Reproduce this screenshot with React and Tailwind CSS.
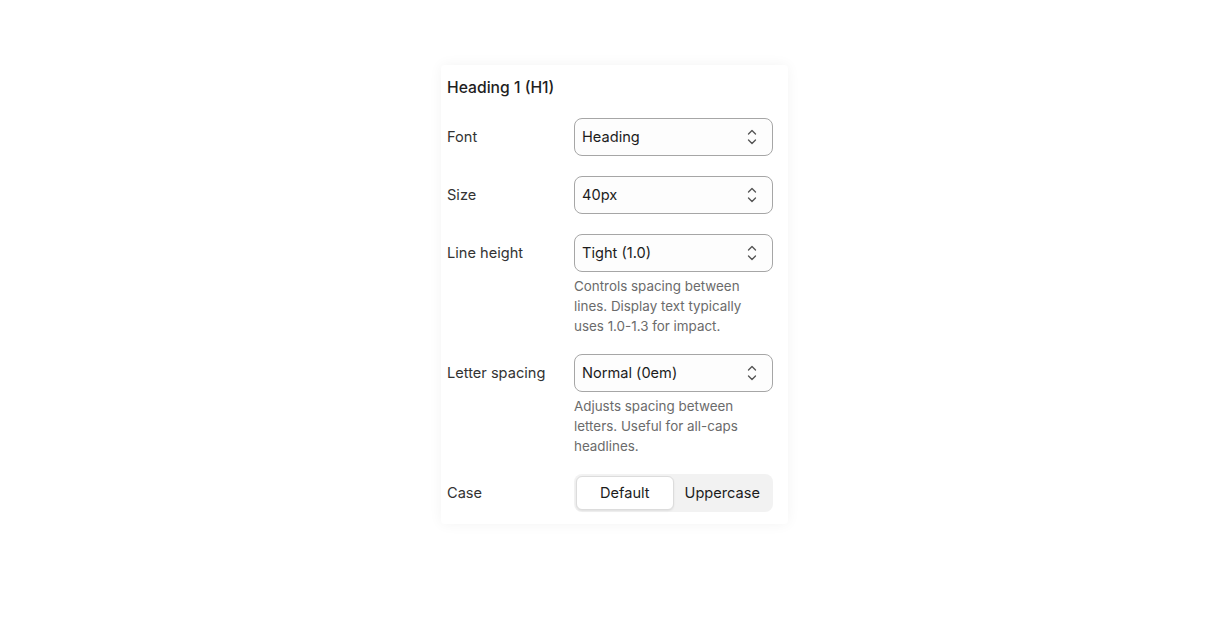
import React, { useState } from 'react';

const Chevrons = () => (
    <svg width="10" height="16" viewBox="0 0 10 16" fill="none" stroke="#555" strokeWidth="1.35" strokeLinecap="round" strokeLinejoin="round">
        <path d="M1.5 5 5 1.5 8.5 5" />
        <path d="M1.5 11 5 14.5 8.5 11" />
    </svg>
);

const SelectBox = ({ value }) => (
    <div className="flex h-[38px] w-[199px] items-center justify-between rounded-lg border border-[#a6a6a6] bg-[#fdfdfd] pl-[7px] pr-[15px] text-[14.6px] text-[#1c1c1c]">
        <span className="pt-[2px]">{value}</span>
        <Chevrons />
    </div>
);

const Row = ({ label, value, help, className }) => (
    <div className={"flex " + (className || "")}>
        <div className="flex h-[38px] w-[127px] items-center pt-[2px] text-[14.6px] text-[#333]">{label}</div>
        <div className="flex flex-col">
            <SelectBox value={value} />
            {help && (
                <p className="mt-[4px] w-[192px] text-[13.4px] leading-5 text-[#6b6b6b]">{help}</p>
            )}
        </div>
    </div>
);

const App = () => {
    const [caseMode, setCaseMode] = useState('default');

    return (
        <div className="flex min-h-screen justify-center bg-white pt-[65px] pr-[3px]" style={{ fontFamily: 'Inter, "Noto Sans", sans-serif' }}>
            <div className="h-fit w-[347px] rounded-sm bg-white pl-[6px] pr-[15px] pt-[13px] pb-3 shadow-[0_0_14px_rgba(0,0,0,0.05)]">
                <h2 className="text-[15.7px] font-[550] leading-5 text-[#1f1f1f]">Heading 1 (H1)</h2>
                <Row className="mt-5" label="Font" value="Heading" />
                <Row className="mt-5" label="Size" value="40px" />
                <Row className="mt-5" label="Line height" value="Tight (1.0)" help="Controls spacing between lines. Display text typically uses 1.0-1.3 for impact." />
                <Row className="mt-[18px]" label="Letter spacing" value="Normal (0em)" help="Adjusts spacing between letters. Useful for all-caps headlines." />
                <div className="mt-[18px] flex">
                    <div className="flex h-[38px] w-[127px] items-center pt-[2px] text-[14.6px] text-[#333]">Case</div>
                    <div className="grid h-[38px] w-[199px] grid-cols-2 rounded-lg bg-[#f2f2f2] p-[2px] text-[14.6px] text-[#1c1c1c]">
                        <button
                            onClick={() => setCaseMode('default')}
                            className={caseMode === 'default' ? "rounded-md border border-[#dcdcdc] bg-white pt-[2px] shadow-[0_1px_2px_rgba(0,0,0,0.08)]" : "rounded-md pt-[2px]"}
                        >
                            Default
                        </button>
                        <button
                            onClick={() => setCaseMode('upper')}
                            className={caseMode === 'upper' ? "rounded-md border border-[#dcdcdc] bg-white pt-[2px] shadow-[0_1px_2px_rgba(0,0,0,0.08)]" : "rounded-md pt-[2px]"}
                        >
                            Uppercase
                        </button>
                    </div>
                </div>
            </div>
        </div>
    );
};

export default App;
